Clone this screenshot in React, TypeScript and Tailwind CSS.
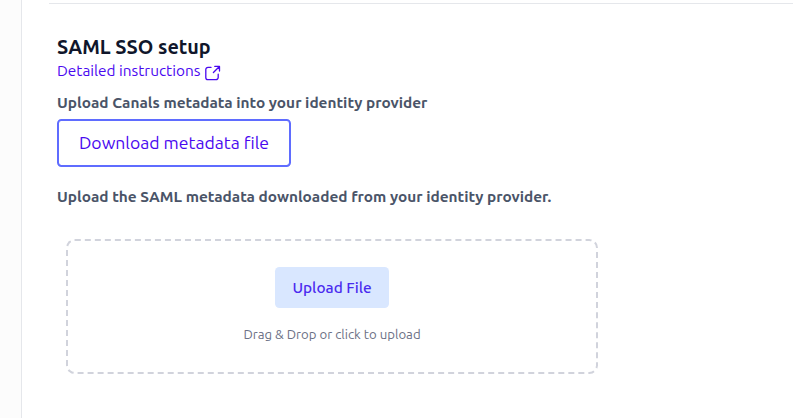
const ExternalLinkIcon = () => {
    return (
        <svg className="ml-[5px] mt-1 size-4 shrink-0" viewBox="0 0 16 16" fill="none" stroke="currentColor" strokeWidth="1.3" strokeLinecap="round" strokeLinejoin="round">
            <path d="M6 2.4H3A2.2 2.2 0 0 0 .8 4.6v7.8A2.2 2.2 0 0 0 3 14.600h8a2.200 2.200 0 0 0 2.200-2.200V9.200" />
            <path d="M9.800 1.400h4.700v4.700M14.400 1.500 8.400 7.500" />
        </svg>
    )
}

const UploadArea = () => {
    return (
        <div className="ml-[9px] mt-[30px] flex h-[135px] w-[532px] flex-col items-center rounded-[8.8px] border-2 border-dashed border-[#d1d3dc] pt-[26px]">
            <button className="h-[41px] w-[114px] rounded-[4.4px] bg-[#d9e7ff] text-[15.4px] font-medium text-[#4a2bef]">
                <span className="whitespace-nowrap">Upload File</span>
            </button>
            <p className="mt-4 whitespace-nowrap text-[13.2px] leading-5 text-[#6b7085]">
                <span>Drag &amp; Drop or click to upload</span>
            </p>
        </div>
    )
}

const App = () => {
    return (
        <div className="flex h-[418px] w-full overflow-hidden bg-[#fcfcfc] font-['Ubuntu','Noto_Sans',sans-serif]">
            <main className="ml-[21px] flex-1 border-l border-gray-200 bg-white pt-[3px]">
                <hr className="ml-[27px] border-gray-200" />
                <section className="pl-[35px] pt-[29px]">
                    <h2 className="text-[19.8px] leading-7 font-semibold text-[#10162b]"><span>SAML SSO setup</span></h2>
                    <a className="flex h-5 items-start text-[15.4px] leading-5 text-[#4a08f0]">
                        <span>Detailed instructions</span>
                        <ExternalLinkIcon />
                    </a>
                    <h3 className="mt-2.5 text-[15.4px] leading-6 font-semibold text-[#4a5468]"><span>Upload Canals metadata into your identity provider</span></h3>
                    <button className="mt-1 block h-12 w-[234px] rounded-[4.4px] border-2 border-[#5f6cff] text-[17.6px] text-[#4a08f0]">
                        <span className="whitespace-nowrap">Download metadata file</span>
                    </button>
                    <h3 className="mt-[18px] text-[15.4px] leading-6 font-semibold text-[#4a5468]"><span>Upload the SAML metadata downloaded from your identity provider.</span></h3>
                    <UploadArea />
                </section>
            </main>
        </div>
    )
}

export default App
